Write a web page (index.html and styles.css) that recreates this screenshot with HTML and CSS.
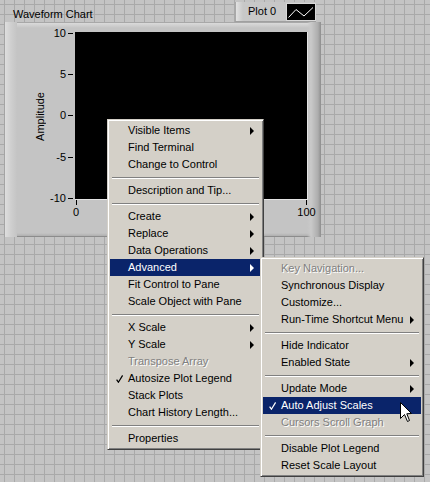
FILE: index.html
```html
<!DOCTYPE html>
<html>
<head>
<meta charset="utf-8">
<link rel="stylesheet" href="styles.css">
</head>
<body>
<div class="page">
  <div class="chart">
    <div class="chart-head">
      <span class="chart-label">Waveform Chart</span>
      <div class="legend">
        <span class="legend-name">Plot 0</span>
        <span class="swatch"><svg width="28" height="16" viewBox="0 0 28 16"><polyline points="1.5,13.5 9,5.5 17,12 26,3.5" fill="none" stroke="#fff" stroke-width="1"/></svg></span>
      </div>
    </div>
    <div class="chart-panel">
      <div class="y-title"><span>Amplitude</span></div>
      <div class="y-scale">
        <div class="ylab"><span>10</span><i class="ytick"></i></div>
        <div class="ylab"><span>5</span><i class="ytick"></i></div>
        <div class="ylab"><span>0</span><i class="ytick"></i></div>
        <div class="ylab"><span>-5</span><i class="ytick"></i></div>
        <div class="ylab"><span>-10</span><i class="ytick"></i></div>
      </div>
      <div class="plot"></div>
      <div class="x-scale">
        <div class="xlab"><i class="xtick"></i><span>0</span></div>
        <div class="xlab"><i class="xtick"></i><span>100</span></div>
      </div>
    </div>
  </div>

  <div class="menu menu-main">
    <div class="item"><span class="lbl">Visible Items</span><i class="arrow"></i></div>
    <div class="item"><span class="lbl">Find Terminal</span></div>
    <div class="item"><span class="lbl">Change to Control</span></div>
    <div class="sep"></div>
    <div class="item"><span class="lbl">Description and Tip...</span></div>
    <div class="sep"></div>
    <div class="item"><span class="lbl">Create</span><i class="arrow"></i></div>
    <div class="item"><span class="lbl">Replace</span><i class="arrow"></i></div>
    <div class="item"><span class="lbl">Data Operations</span><i class="arrow"></i></div>
    <div class="item active"><span class="lbl">Advanced</span><i class="arrow"></i></div>
    <div class="item"><span class="lbl">Fit Control to Pane</span></div>
    <div class="item"><span class="lbl">Scale Object with Pane</span></div>
    <div class="sep"></div>
    <div class="item"><span class="lbl">X Scale</span><i class="arrow"></i></div>
    <div class="item"><span class="lbl">Y Scale</span><i class="arrow"></i></div>
    <div class="item disabled"><span class="lbl">Transpose Array</span></div>
    <div class="item"><svg class="check" width="7" height="8" viewBox="0 0 7 8"><polyline points="0.6,4.6 2.4,7.2 6.6,0.4" fill="none" stroke="#000" stroke-width="1.2"/></svg><span class="lbl">Autosize Plot Legend</span></div>
    <div class="item"><span class="lbl">Stack Plots</span></div>
    <div class="item"><span class="lbl">Chart History Length...</span></div>
    <div class="sep"></div>
    <div class="item"><span class="lbl">Properties</span></div>
  </div>

  <div class="menu menu-sub">
    <div class="item disabled"><span class="lbl">Key Navigation...</span></div>
    <div class="item"><span class="lbl">Synchronous Display</span></div>
    <div class="item"><span class="lbl">Customize...</span></div>
    <div class="item"><span class="lbl">Run-Time Shortcut Menu</span><i class="arrow"></i></div>
    <div class="sep"></div>
    <div class="item"><span class="lbl">Hide Indicator</span></div>
    <div class="item"><span class="lbl">Enabled State</span><i class="arrow"></i></div>
    <div class="sep"></div>
    <div class="item"><span class="lbl">Update Mode</span><i class="arrow"></i></div>
    <div class="item active"><svg class="check" width="7" height="8" viewBox="0 0 7 8"><polyline points="0.6,4.6 2.4,7.2 6.6,0.4" fill="none" stroke="#fff" stroke-width="1.2"/></svg><span class="lbl">Auto Adjust Scales</span></div>
    <div class="item disabled"><span class="lbl">Cursors Scroll Graph</span></div>
    <div class="sep"></div>
    <div class="item"><span class="lbl">Disable Plot Legend</span></div>
    <div class="item"><span class="lbl">Reset Scale Layout</span></div>
  </div>

  <svg class="cursor" width="13" height="21" viewBox="0 0 13 21"><path d="M0.5,0.5 L0.5,16.5 L4.5,12.5 L7.5,19.5 L9.5,18.5 L6.8,11.8 L11.5,11.5 Z" fill="#fff" stroke="#000" stroke-width="1" stroke-linejoin="miter"/></svg>
</div>
</body>
</html>
```
FILE: styles.css
```css
html, body {
  margin: 0;
  padding: 0;
}

.page {
  position: relative;
  width: 430px;
  height: 482px;
  overflow: hidden;
  box-sizing: border-box;
  padding-left: 4px;
  font-family: "Liberation Sans", Arial, sans-serif;
  font-size: 11px;
  color: #000;
  background-color: #c4c4c4;
  background-image:
    linear-gradient(#a9a9a9 1px, transparent 1px),
    linear-gradient(90deg, #a9a9a9 1px, transparent 1px);
  background-size: 10px 10px;
  background-position: 4px 4px;
}

.chart {
  width: 317px;
}

.chart-head {
  height: 22px;
  display: flex;
  align-items: flex-start;
}

.chart-label {
  margin: 8px 0 0 9px;
  line-height: 13px;
}

.legend {
  margin: 2px 5px 0 auto;
  width: 81px;
  height: 20px;
  box-sizing: border-box;
  display: flex;
  align-items: center;
  background: linear-gradient(90deg, #a8a8a8 0, #a8a8a8 1px, #e2e2e2 1px, #c8c8c8 8px, #c6c6c6 100%);
  border-bottom: 1px solid #a0a0a0;
}

.legend-name {
  padding-left: 13px;
  line-height: 13px;
}

.swatch {
  margin-left: auto;
  margin-right: 1px;
  width: 28px;
  height: 16px;
  box-sizing: border-box;
  background: #000;
  outline: 1px solid #d8d8d8;
  display: block;
}

.swatch svg {
  display: block;
}

.chart-panel {
  height: 215px;
  box-sizing: border-box;
  padding-top: 10px;
  display: grid;
  grid-template-columns: 44px 27px 233px;
  grid-template-rows: 168px 1fr;
  background-color: #c4c4c4;
  background-image:
    linear-gradient(90deg, #a4a4a4 0, #a4a4a4 1px, #dedede 1px, #cfcfcf 7px, #c4c4c4 13px, rgba(196,196,196,0) 13px),
    linear-gradient(270deg, #8e8e8e 0, #adadad 3px, #c9c9c9 10px, rgba(196,196,196,0) 14px),
    linear-gradient(180deg, #a8a8a8 0, #a8a8a8 1px, #dadada 1px, #c4c4c4 6px, rgba(196,196,196,0) 6px),
    linear-gradient(0deg, #8c8c8c 0, #8c8c8c 1px, #b0b0b0 1px, #c4c4c4 4px, rgba(196,196,196,0) 4px);
}

.y-title {
  grid-column: 1;
  grid-row: 1;
  display: flex;
  align-items: center;
  justify-content: flex-end;
  padding-right: 1px;
}

.y-title span {
  writing-mode: vertical-rl;
  transform: rotate(180deg);
  line-height: 13px;
}

.y-scale {
  grid-column: 2;
  grid-row: 1;
  display: flex;
  flex-direction: column;
  justify-content: space-between;
  padding: 1px 2px 1.5px 0;
}

.ylab {
  height: 0;
  display: flex;
  align-items: center;
  justify-content: flex-end;
  line-height: 13px;
}

.ytick {
  width: 5px;
  height: 1px;
  background: #000;
  margin-left: 2px;
}

.plot {
  grid-column: 3;
  grid-row: 1;
  background: #000;
  border-right: 1px solid #e4e4e4;
  border-bottom: 1px solid #e4e4e4;
}

.x-scale {
  grid-column: 3;
  grid-row: 2;
  display: flex;
  justify-content: space-between;
  align-items: flex-start;
  padding: 0 1.5px 0 1px;
}

.xlab {
  width: 0;
  display: flex;
  flex-direction: column;
  align-items: center;
}

.xtick {
  width: 1px;
  height: 5px;
  background: #000;
  flex: none;
}

.xlab span {
  line-height: 13px;
  margin-top: 1px;
  white-space: nowrap;
}

/* Menus */
.menu {
  position: absolute;
  box-sizing: border-box;
  background: #d4d0c8;
  border: 1px solid;
  border-color: #d4d0c8 #404040 #404040 #d4d0c8;
  box-shadow: inset 1px 1px 0 #fff, inset -1px -1px 0 #808080;
  padding: 2px;
}

.menu-main {
  left: 107px;
  top: 119px;
  width: 157px;
}

.menu-sub {
  left: 260px;
  top: 257px;
  width: 164px;
}

.item {
  height: 17px;
  line-height: 17px;
  display: grid;
  grid-template-columns: 18px 1fr 11px;
  align-items: center;
  white-space: nowrap;
}

.item .lbl {
  grid-column: 2;
  grid-row: 1;
}

.item .check {
  grid-column: 1;
  grid-row: 1;
  margin-left: 6px;
  display: block;
}

.item .arrow {
  grid-column: 3;
  grid-row: 1;
  width: 0;
  height: 0;
  border-left: 4px solid #000;
  border-top: 4px solid transparent;
  border-bottom: 4px solid transparent;
}

.item.active {
  background: #0a246a;
  color: #fff;
}

.item.active .arrow {
  border-left-color: #fff;
}

.item.disabled {
  color: #808080;
  text-shadow: 1px 1px 0 #fff;
}

.sep {
  height: 9px;
  display: flex;
  align-items: center;
  padding: 0 2px;
}

.sep::before {
  content: "";
  flex: 1;
  height: 0;
  border-top: 1px solid #808080;
  border-bottom: 1px solid #fff;
}

.cursor {
  position: absolute;
  left: 400px;
  top: 402px;
  display: block;
}
```
